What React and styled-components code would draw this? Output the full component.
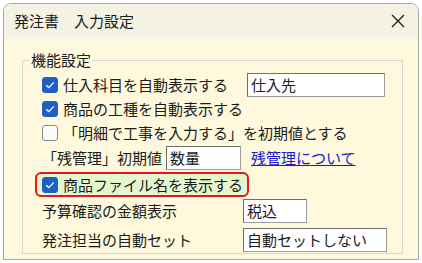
import React from "react";
import styled, { createGlobalStyle } from "styled-components";

const Global = createGlobalStyle`
  html, body { margin: 0; padding: 0; background: #ffffff; }
  body {
    font-family: "Noto Sans CJK JP", "Noto Sans", sans-serif;
    color: #1b1b1b;
  }
`;

const Window = styled.div`
  margin: 3px 0 0 3px;
  width: 416px;
  height: 257px;
  box-sizing: border-box;
  border: 1px solid #a9a9a4;
  border-radius: 8px 8px 0 0;
  background: #fef8dc;
  overflow: hidden;
  display: flex;
  flex-direction: column;
`;

const TitleBar = styled.div`
  height: 35px;
  flex: none;
  background: #f4f2e3;
  display: flex;
  align-items: center;
  justify-content: space-between;
  padding: 0 12px 2px 10px;
  box-sizing: border-box;
`;

const Title = styled.div`
  font-size: 15px;
  line-height: 20px;
  color: #1a1a1a;
`;

const Close = styled.div`
  width: 16px;
  height: 16px;
  display: flex;
  align-items: center;
  justify-content: center;
`;

const Group = styled.fieldset`
  margin: 11px 15px 0 18px;
  padding: 0 0 1px 12px;
  border: 1px solid #d9d7cd;
  min-width: 0;
`;

const Legend = styled.legend`
  font-size: 15px;
  line-height: 20px;
  padding: 0 2px;
  margin-left: -6px;
  color: #1a1a1a;
`;

const Row = styled.div`
  display: flex;
  align-items: center;
  height: ${(p) => p.$h || 24}px;
  margin-top: ${(p) => p.$mt || 0}px;
  padding-left: 7px;
  font-size: 15px;
  line-height: 24px;
  white-space: nowrap;
`;

const HighlightRow = styled.div`
  display: flex;
  align-items: center;
  width: 214px;
  height: 25px;
  margin-top: 2px;
  box-sizing: border-box;
  border: 2px solid #e5161d;
  border-radius: 6px;
  background: #e5f6cf;
  padding-left: 5px;
  font-size: 15px;
  line-height: 24px;
  white-space: nowrap;
`;

const Box = styled.span`
  width: 16px;
  height: 16px;
  flex: none;
  box-sizing: border-box;
  border-radius: 3px;
  margin-right: 5px;
  display: flex;
  align-items: center;
  justify-content: center;
  background: ${(p) => (p.$checked ? "#1f60c2" : "#fbfbfb")};
  border: 1px solid ${(p) => (p.$checked ? "#1f60c2" : "#8a8a8a")};
`;

const Label = styled.span`
  width: ${(p) => (p.$w ? p.$w + "px" : "auto")};
  flex: none;
`;

const Field = styled.div`
  width: ${(p) => p.$w}px;
  height: 24px;
  margin-left: ${(p) => p.$ml || 0}px;
  box-sizing: border-box;
  background: #ffffff;
  border: 1px solid #9b9b9b;
  border-top-color: #6e6e6e;
  border-left-color: #6e6e6e;
  padding-left: 3px;
  font-size: 15px;
  line-height: 22px;
  flex: none;
`;

const Link = styled.a`
  color: #1a1ad4;
  text-decoration: underline;
  margin-left: 10px;
  cursor: pointer;
`;

const Check = ({ checked }) => (
  <Box $checked={checked}>
    {checked && (
      <svg width="10" height="8" viewBox="0 0 10 8">
        <path d="M1.2 4.2 L3.8 6.6 L8.8 1.4" fill="none" stroke="#fff" strokeWidth="1.3" />
      </svg>
    )}
  </Box>
);

export default function App() {
  return (
    <>
      <Global />
      <Window>
        <TitleBar>
          <Title>発注書　入力設定</Title>
          <Close>
            <svg width="14" height="14" viewBox="0 0 14 14">
              <path d="M1 1 L13 13 M13 1 L1 13" stroke="#1c1c1c" strokeWidth="1.3" />
            </svg>
          </Close>
        </TitleBar>
        <Group>
          <Legend>機能設定</Legend>
          <Row $mt={3}>
            <Check checked />
            <Label $w={184}>仕入科目を自動表示する</Label>
            <Field $w={138}>仕入先</Field>
          </Row>
          <Row>
            <Check checked />
            <Label>商品の工種を自動表示する</Label>
          </Row>
          <Row>
            <Check />
            <Label>「明細で工事を入力する」を初期値とする</Label>
          </Row>
          <Row $mt={1}>
            <Label $w={124}>「残管理」初期値</Label>
            <Field $w={75}>数量</Field>
            <Link>残管理について</Link>
          </Row>
          <HighlightRow>
            <Check checked />
            <Label>商品ファイル名を表示する</Label>
          </HighlightRow>
          <Row $mt={2}>
            <Label $w={201}>予算確認の金額表示</Label>
            <Field $w={64}>税込</Field>
          </Row>
          <Row $mt={4} $h={25}>
            <Label $w={201}>発注担当の自動セット</Label>
            <Field $w={144}>自動セットしない</Field>
          </Row>
        </Group>
      </Window>
    </>
  );
}
